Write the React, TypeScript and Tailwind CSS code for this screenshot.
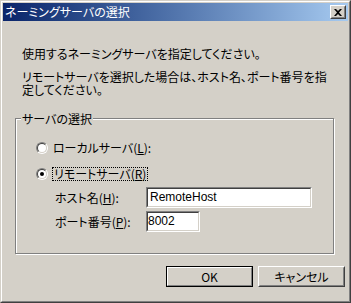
import React from "react";

const jp = "font-['Noto_Sans_CJK_JP','Noto_Sans_CJK_SC',sans-serif] [font-feature-settings:'palt']";

function Radio({ checked }: { checked?: boolean }) {
  return (
    <span className="flex h-3 w-3 shrink-0 rounded-full border border-t-[#808080] border-l-[#808080] border-r-white border-b-white">
      <span className="flex h-full w-full items-center justify-center rounded-full border border-t-[#404040] border-l-[#404040] border-r-[#d4d0c8] border-b-[#d4d0c8] bg-white">
        {checked && <span className="h-1 w-1 rounded-full bg-black" />}
      </span>
    </span>
  );
}

function Field({ value, inner, pad }: { value: string; inner: string; pad: string }) {
  return (
    <div className="border border-t-[#808080] border-l-[#808080] border-r-white border-b-white">
      <div
        className={`h-[19px] ${inner} ${pad} border border-t-[#404040] border-l-[#404040] border-r-[#d4d0c8] border-b-[#d4d0c8] bg-white font-['Liberation_Sans',sans-serif] text-[12px] leading-[17px] text-black`}
      >
        {value}
      </div>
    </div>
  );
}

function Button({ label, primary }: { label: string; primary?: boolean }) {
  const face = (
    <div className="h-full border border-t-white border-l-white border-r-[#404040] border-b-[#404040]">
      <div className="flex h-full items-center justify-center border border-t-[#d4d0c8] border-l-[#d4d0c8] border-r-[#808080] border-b-[#808080] text-[12px] leading-none">
        {label}
      </div>
    </div>
  );
  return (
    <div className={`h-[21px] w-[87px] ${primary ? "border border-black" : ""}`}>
      {primary ? (
        <div className="h-full border border-t-white border-l-white border-r-[#808080] border-b-[#808080]">
          <div className="flex h-full items-center justify-center text-[12px] leading-none">{label}</div>
        </div>
      ) : (
        face
      )}
    </div>
  );
}

export default function App() {
  return (
    <div className={`h-[303px] w-[351px] border border-t-[#d4d0c8] border-l-[#d4d0c8] border-r-[#404040] border-b-[#404040] bg-[#d4d0c8] ${jp} text-black`}>
      <div className="h-full border border-t-white border-l-white border-r-[#808080] border-b-[#808080] p-px">
        {/* title bar */}
        <div className="flex h-[18px] items-center justify-between bg-gradient-to-r from-[#0a246a] to-[#a6caf0] pl-[2px] pr-[2px]">
          <span className="text-[12px] leading-none text-white">ネーミングサーバの選択</span>
          <div className="h-[14px] w-4 border border-t-white border-l-white border-r-[#404040] border-b-[#404040] bg-[#d4d0c8]">
            <div className="flex h-full items-center justify-center border border-t-[#d4d0c8] border-l-[#d4d0c8] border-r-[#808080] border-b-[#808080]">
              <svg width="8" height="7" viewBox="0 0 8 7">
                <path d="M0 0h2l2 2 2-2h2L5 3.5 8 7H6L4 5 2 7H0l3-3.5z" fill="#000" />
              </svg>
            </div>
          </div>
        </div>

        {/* body */}
        <div className="flex flex-col pl-3 pt-[26px]">
          <div className="pl-[7px] text-[12px] leading-[13px]">
            <p>使用するネーミングサーバを指定してください。</p>
            <p className="mt-[10px]">
              リモートサーバを選択した場合は、ホスト名、ポート番号を指
              <br />
              定してください。
            </p>
          </div>

          {/* group box */}
          <div className="relative mt-[22px] h-[136px] w-[319px] border border-[#808080] shadow-[inset_1px_1px_0_#fff,1px_1px_0_#fff]">
            <span className="absolute -top-[7px] left-[5px] bg-[#d4d0c8] px-[1px] text-[12px] leading-[13px]">
              サーバの選択
            </span>
            <div className="flex flex-col pl-[20px] pt-[22px] text-[12px] leading-[13px]">
              <div className="flex h-[13px] items-center gap-1">
                <Radio />
                <span className="px-px">
                  ローカルサーバ(<span className="underline">L</span>):
                </span>
              </div>
              <div className="mt-[13px] flex h-[13px] items-center gap-1">
                <Radio checked />
                <span className="border border-dotted border-black px-px leading-[12px]">
                  リモートサーバ(<span className="underline">R</span>)
                </span>
              </div>
              <div className="mt-[7px] flex items-center pl-[19px]">
                <span className="w-[91px]">
                  ホスト名(<span className="underline">H</span>):
                </span>
                <Field value="RemoteHost" inner="w-[164px]" pad="pl-[2px]" />
              </div>
              <div className="mt-[3px] flex items-center pl-[19px]">
                <span className="w-[91px]">
                  ポート番号(<span className="underline">P</span>):
                </span>
                <Field value="8002" inner="w-[52px]" pad="pl-0" />
              </div>
            </div>
          </div>

          {/* buttons */}
          <div className="mt-[12px] flex w-[331px] justify-end gap-[5px] pr-[1px]">
            <Button label="OK" primary />
            <Button label="キャンセル" />
          </div>
        </div>
      </div>
    </div>
  );
}
